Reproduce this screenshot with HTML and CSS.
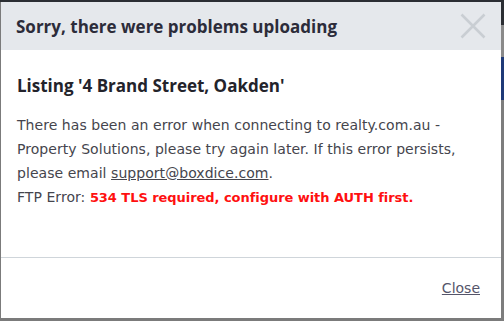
FILE: index.html
```html
<!DOCTYPE html>
<html>
<head>
<meta charset="utf-8">
<link rel="stylesheet" href="styles.css">
</head>
<body>
<div class="modal">
  <div class="modal-header">
    <h1 class="modal-title">Sorry, there were problems uploading</h1>
    <button class="close-x" aria-label="Close">
      <svg width="26" height="26" viewBox="0 0 26 26"><path d="M1.5 1.5 L24.5 24.5 M24.5 1.5 L1.5 24.5" stroke="#c9ced3" stroke-width="2.6" fill="none"/></svg>
    </button>
  </div>
  <div class="modal-body">
    <h2 class="listing">Listing '4 Brand Street, Oakden'</h2>
    <p class="message"><span>There has been an error when connecting to realty.com.au - Property Solutions, please try again later. If this error persists,</span> <span>please email</span> <a href="#">support@boxdice.com</a>.<br><span>FTP Error:</span> <strong class="err">534 TLS required, configure with AUTH first.</strong></p>
  </div>
  <div class="modal-footer">
    <a href="#" class="close-link">Close</a>
  </div>
</div>
</body>
</html>
```
FILE: styles.css
```css
html, body { margin: 0; padding: 0; }
body {
  width: 504px;
  height: 321px;
  overflow: hidden;
  background:
    linear-gradient(to bottom, #2b2e33 0, #2b2e33 25px, #8a8a8a 25px, #8a8a8a 57px, #1f3a78 57px, #1f3a78 100px, #7d7d7d 100px) right top / 3px 100% no-repeat,
    linear-gradient(to bottom, #2b2e33 0, #2b2e33 2px, #7b7b7b 2px);
  font-family: "Open Sans", "Liberation Sans", sans-serif;
}
.modal {
  margin: 2px 0 0 1px;
  width: 500px;
  height: 316px;
  background: #fff;
  display: flex;
  flex-direction: column;
}
.modal-header {
  height: 48px;
  background: #e5e8ec;
  display: flex;
  align-items: center;
  justify-content: space-between;
  padding: 0 15px 0 15px;
}
.modal-title {
  margin: 0;
  font-size: 17px;
  font-weight: 700;
  color: #2c2c3a;
}
.close-x {
  border: 0;
  background: none;
  padding: 0;
  width: 26px;
  height: 26px;
  display: flex;
}
.modal-body {
  padding: 24px 15px 0 16px;
  flex: 0 0 208px;
  box-sizing: border-box;
  border-bottom: 1px solid #cfd5da;
}
.listing {
  margin: 0 0 15px;
  font-size: 17px;
  line-height: 24px;
  font-weight: 700;
  color: #23232b;
}
.message {
  margin: 0;
  max-width: 452px;
  font-family: "DejaVu Sans", sans-serif;
  font-size: 14px;
  letter-spacing: 0.05px;
  line-height: 24px;
  color: #45454d;
}
.message a { color: #45454d; }
.err {
  font-family: "DejaVu Sans", sans-serif;
  font-size: 13px;
  color: #ff1010;
  font-weight: 700;
  letter-spacing: -0.05px;
}
.modal-footer {
  flex: 1;
  display: flex;
  align-items: center;
  justify-content: flex-end;
  padding: 0 21px 0 0;
}
.close-link {
  font-family: "DejaVu Sans", sans-serif;
  font-size: 14px;
  color: #55556a;
}
```
